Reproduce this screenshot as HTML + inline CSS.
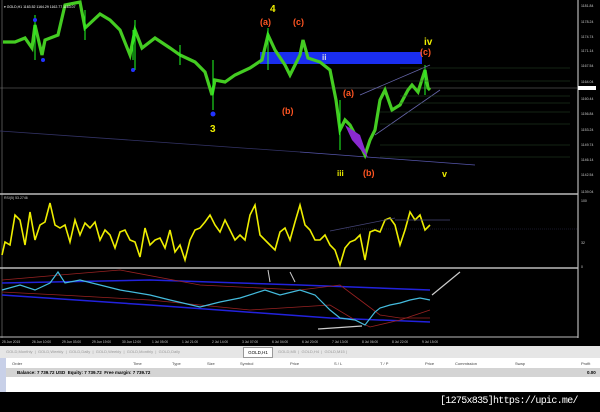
<!DOCTYPE html><html><head><style>
body{margin:0;width:600px;height:412px;background:#000;overflow:hidden;font-family:"Liberation Sans",sans-serif;position:relative}
.a{position:absolute}
.t{font-size:4px;color:#ccc;white-space:nowrap}
</style></head><body>
<svg class="a" style="left:0;top:0" width="600" height="346" viewBox="0 0 600 346">
<rect x="0" y="0" width="578" height="338" fill="#000"/>
<line x1="578" y1="0" x2="578" y2="338" stroke="#ddd" stroke-width="1"/>
<line x1="2" y1="0" x2="2" y2="338" stroke="#888" stroke-width="0.6"/>
<line x1="0" y1="194" x2="578" y2="194" stroke="#bbb" stroke-width="1.5"/>
<line x1="0" y1="268" x2="578" y2="268" stroke="#bbb" stroke-width="1.5"/>
<line x1="0" y1="337" x2="578" y2="337" stroke="#bbb" stroke-width="1"/>
<line x1="0" y1="88" x2="578" y2="88" stroke="#777" stroke-width="0.6"/>
<rect x="260" y="52" width="162" height="12" fill="#1a2ef0"/>
<line x1="0" y1="131" x2="300" y2="152" stroke="#336" stroke-width="0.8"/>
<line x1="300" y1="152" x2="475" y2="165" stroke="#55a" stroke-width="0.8"/>
<polyline fill="none" stroke="#4c2" stroke-width="3.2" points="3,42 15,42 25,38 32,48 35,25 42,55 45,40 58,35 65,5 80,2 85,28 100,14 110,20 120,30 130,55 135,30 142,48 155,38 170,48 180,55 195,62 205,72 212,95 215,80 225,82 235,75 250,68 262,60 268,35 275,50 285,65 290,75 295,65 300,55 303,40 308,58 320,62 330,70 336,100 340,130 345,120 350,125 358,140 365,155 370,140 375,130 380,100 385,90 392,110 400,105 408,90 412,85 418,92 425,70 428,88 430,90"/>
<g stroke="#2f2" stroke-width="1">
<line x1="35" y1="15" x2="35" y2="60"/><line x1="85" y1="10" x2="85" y2="40"/><line x1="135" y1="20" x2="135" y2="70"/><line x1="213" y1="60" x2="213" y2="110"/><line x1="268" y1="28" x2="268" y2="70"/><line x1="340" y1="100" x2="340" y2="150"/><line x1="425" y1="65" x2="425" y2="95"/><line x1="133" y1="30" x2="133" y2="60"/><line x1="180" y1="45" x2="180" y2="65"/>
</g>
<polygon points="345,125 360,135 368,158 352,140" fill="#8a2ad0"/>
<line x1="360" y1="95" x2="430" y2="65" stroke="#66a" stroke-width="0.8"/>
<line x1="375" y1="135" x2="440" y2="90" stroke="#66a" stroke-width="0.8"/>
<g stroke="#2a4a2a" stroke-width="0.6">
<line x1="400" y1="68" x2="570" y2="68"/><line x1="400" y1="81" x2="570" y2="81"/><line x1="400" y1="96" x2="570" y2="96"/><line x1="400" y1="103" x2="570" y2="103"/><line x1="380" y1="112" x2="570" y2="112"/><line x1="380" y1="124" x2="570" y2="124"/><line x1="380" y1="145" x2="570" y2="145"/><line x1="380" y1="157" x2="570" y2="157"/>
</g>
<circle cx="213" cy="114" r="2.5" fill="#23f"/><circle cx="43" cy="60" r="2" fill="#23f"/><circle cx="35" cy="20" r="2" fill="#23f"/><circle cx="133" cy="70" r="2" fill="#23f"/>
<g font-family="Liberation Sans" font-weight="bold">
<text x="210" y="132" fill="#ee0" font-size="10">3</text>
<text x="270" y="12" fill="#ee0" font-size="10">4</text>
<text x="260" y="25" fill="#f52" font-size="9">(a)</text>
<text x="293" y="25" fill="#f52" font-size="9">(c)</text>
<text x="282" y="114" fill="#f52" font-size="9">(b)</text>
<text x="343" y="96" fill="#f52" font-size="9">(a)</text>
<text x="363" y="176" fill="#f52" font-size="9">(b)</text>
<text x="420" y="55" fill="#f52" font-size="9">(c)</text>
<text x="424" y="45" fill="#ee0" font-size="10">iv</text>
<text x="337" y="176" fill="#ee0" font-size="8">iii</text>
<text x="442" y="177" fill="#ee0" font-size="9">v</text>
<text x="322" y="60" fill="#ddd" font-size="8">ii</text>
</g>
<line x1="346" y1="229" x2="578" y2="229" stroke="#335" stroke-dasharray="1,1" stroke-width="0.6"/>
<polyline fill="none" stroke="#ee0" stroke-width="1.6" points="2,255 5,242 10,245 15,215 20,220 25,245 30,212 35,240 40,225 45,222 50,203 55,225 60,228 65,225 70,242 75,220 80,235 85,223 90,228 95,222 100,240 105,230 110,235 115,248 120,232 125,230 130,240 135,242 140,257 145,228 150,245 155,240 160,238 165,248 170,230 175,252 180,245 185,260 190,240 195,230 200,228 205,222 210,215 215,225 220,232 225,220 230,230 235,240 240,235 245,240 250,215 255,205 260,235 265,240 270,245 275,250 280,232 285,228 290,240 295,222 300,205 305,225 310,230 315,240 320,240 325,235 330,245 335,250 340,265 345,248 350,242 355,240 360,235 365,260 370,232 375,230 380,232 385,220 390,218 395,225 400,245 405,230 410,212 415,220 420,215 425,230 430,225"/>
<line x1="330" y1="231" x2="395" y2="218" stroke="#447" stroke-width="0.7"/><line x1="395" y1="220" x2="450" y2="220" stroke="#447" stroke-width="0.7"/>
<polyline fill="none" stroke="#22d" stroke-width="1.5" points="2,283 150,280 300,285 430,290"/>
<polyline fill="none" stroke="#22d" stroke-width="1.5" points="2,295 150,305 330,318 430,322"/>
<polyline fill="none" stroke="#922" stroke-width="0.8" points="2,280 60,275 120,270 200,285 300,290 340,285 360,300 380,315 400,318 430,318"/>
<polyline fill="none" stroke="#922" stroke-width="0.8" points="2,292 60,295 150,300 250,310 330,305 355,320 370,327 400,320 430,310"/>
<polyline fill="none" stroke="#4bd" stroke-width="1.2" points="2,290 20,285 35,290 50,283 58,272 65,283 80,280 100,285 120,290 150,295 170,300 200,307 220,302 240,298 265,290 280,295 300,290 315,295 330,310 340,318 355,320 365,325 375,312 380,308 390,305 400,303 410,300 420,298 430,300"/>
<line x1="268" y1="270" x2="270" y2="282" stroke="#ccc"/><line x1="290" y1="272" x2="295" y2="282" stroke="#ccc"/>
<line x1="460" y1="272" x2="432" y2="295" stroke="#ccc" stroke-width="1.2"/>
<line x1="318" y1="329" x2="362" y2="326" stroke="#ccc" stroke-width="1.2"/>
<rect x="578" y="86" width="18" height="4" fill="#fff"/>
<g font-size="3.5" fill="#ccc" font-family="Liberation Sans">
<text x="581" y="7">1181.84</text><text x="581" y="23">1178.24</text><text x="581" y="38">1174.74</text><text x="581" y="52">1171.14</text><text x="581" y="67">1167.54</text><text x="581" y="83">1164.04</text><text x="581" y="100">1160.44</text><text x="581" y="115">1156.84</text><text x="581" y="131">1153.24</text><text x="581" y="146">1149.74</text><text x="581" y="161">1146.14</text><text x="581" y="176">1142.54</text><text x="581" y="193">1139.04</text>
<text x="581" y="202">100</text><text x="581" y="244">32</text><text x="581" y="268">0</text>
<text x="4" y="8" fill="#fff">▾ GOLD,H1  1163.52  1164.29  1162.77  1163.07</text>
<text x="4" y="199">RSI(5) 53.2746</text>
</g>
<g font-size="3.3" fill="#ccc" font-family="Liberation Sans">
<text x="2" y="343">25 Jun 2015</text><text x="32" y="343">26 Jun 10:00</text><text x="62" y="343">29 Jun 03:00</text><text x="92" y="343">29 Jun 19:00</text><text x="122" y="343">30 Jun 12:00</text><text x="152" y="343">1 Jul 05:00</text><text x="182" y="343">1 Jul 21:00</text><text x="212" y="343">2 Jul 14:00</text><text x="242" y="343">3 Jul 07:00</text><text x="272" y="343">6 Jul 04:00</text><text x="302" y="343">6 Jul 20:00</text><text x="332" y="343">7 Jul 13:00</text><text x="362" y="343">8 Jul 06:00</text><text x="392" y="343">8 Jul 22:00</text><text x="422" y="343">9 Jul 15:00</text>
</g>
</svg>
<div class="a" style="left:0;top:346px;width:600px;height:12px;background:#e6e6e6"></div>
<div class="a" style="left:243px;top:347px;width:30px;height:11px;background:#fff;border:1px solid #999;box-sizing:border-box;font-size:4.5px;color:#000;text-align:center;line-height:10px">GOLD,H1</div>
<div class="a t" style="left:6px;top:349px;color:#999">GOLD,Monthly &nbsp;| &nbsp;GOLD,Weekly &nbsp;| &nbsp;GOLD,Daily &nbsp;| &nbsp;GOLD,Weekly &nbsp;| &nbsp;GOLD,Monthly &nbsp;| &nbsp;GOLD,Daily</div>
<div class="a t" style="left:278px;top:349px;color:#999">GOLD,M5 &nbsp;| &nbsp;GOLD,H4 &nbsp;| &nbsp;GOLD,M15 |</div>
<div class="a" style="left:0;top:358px;width:600px;height:34px;background:#fff"></div>
<div class="a" style="left:0;top:358px;width:6px;height:34px;background:#c8d0e8"></div>
<div class="a t" style="left:12px;top:361px;color:#444">Order</div>
<div class="a t" style="left:133px;top:361px;color:#444">Time</div><div class="a t" style="left:172px;top:361px;color:#444">Type</div><div class="a t" style="left:207px;top:361px;color:#444">Size</div><div class="a t" style="left:240px;top:361px;color:#444">Symbol</div><div class="a t" style="left:290px;top:361px;color:#444">Price</div><div class="a t" style="left:334px;top:361px;color:#444">S / L</div><div class="a t" style="left:380px;top:361px;color:#444">T / P</div><div class="a t" style="left:425px;top:361px;color:#444">Price</div><div class="a t" style="left:455px;top:361px;color:#444">Commission</div><div class="a t" style="left:515px;top:361px;color:#444">Swap</div><div class="a t" style="left:581px;top:361px;color:#444">Profit</div>
<div class="a" style="left:6px;top:368px;width:594px;height:9px;background:#d4d4d4"></div>
<div class="a t" style="left:17px;top:369.5px;color:#000;font-weight:bold;font-size:4.5px">Balance: 7 739.72 USD &nbsp;Equity: 7 739.72 &nbsp;Free margin: 7 739.72</div>
<div class="a t" style="left:587px;top:369.5px;color:#000;font-weight:bold;font-size:4.5px">0.00</div>
<div class="a" style="left:440px;top:396px;color:#fff;font-size:10px;font-family:'Liberation Mono',monospace;letter-spacing:-0.7px;white-space:nowrap">[1275x835]https://upic.me/</div>
</body></html>
